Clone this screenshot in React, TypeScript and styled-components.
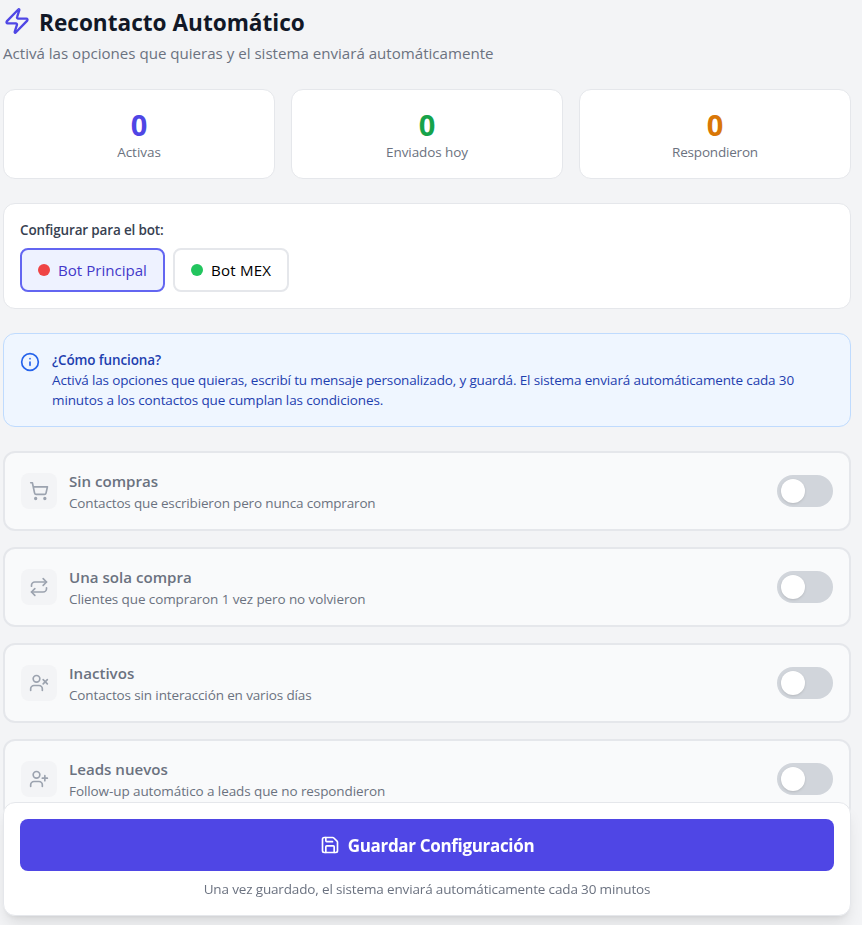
import React from "react";
import styled, { createGlobalStyle } from "styled-components";
import { Zap, Info, ShoppingCart, Repeat, UserX, UserPlus, Save } from "lucide-react";

const GlobalStyle = createGlobalStyle`
  *, *::before, *::after { box-sizing: border-box; }
  body {
    margin: 0;
    background: #f3f4f6;
    color: #000;
    font-family: "Segoe UI", "Open Sans", "Noto Sans", sans-serif;
    font-size: 15.1px;
    line-height: 24px;
  }
  h1, h3, p { margin: 0; }
  button { font: inherit; cursor: pointer; }
`;

const Viewport = styled.div`
  height: 925px;
  overflow: hidden;
  padding: 5px 11px 0 3px;
`;

const Page = styled.main`
  display: flex;
  flex-direction: column;
  gap: 24px;
`;

const Spaced = styled.span<{ $ls?: number }>`
  letter-spacing: ${(p) => p.$ls ?? 0}px;
  white-space: nowrap;
`;

const TitleRow = styled.div`
  display: flex;
  align-items: center;
  gap: 8px;
  height: 32px;
  svg { color: #4f46e5; }
`;

const Title = styled.h1`
  font-size: 22.6px;
  line-height: 32px;
  font-weight: 700;
  color: #111827;
  padding-top: 4px;
`;

const Subtitle = styled.p`
  padding-top: 4px;
  color: #6b7280;
`;

const Stats = styled.section`
  display: grid;
  grid-template-columns: repeat(3, 1fr);
  gap: 16px;
`;

const Panel = styled.section`
  background: #fff;
  border: 1px solid #e5e7eb;
  border-radius: 12px;
  padding: 16px;
`;

const StatCard = styled(Panel)`
  text-align: center;
`;

const StatValue = styled.p<{ $color: string }>`
  height: 36px;
  padding-top: 1px;
  font-size: 29px;
  line-height: 36px;
  font-weight: 700;
  color: ${(p) => p.$color};
`;

const Small = styled.p`
  font-size: 13.5px;
  line-height: 20px;
  color: #6b7280;
`;

const BotLabel = styled(Small)`
  font-weight: 600;
  color: #374151;
  margin-bottom: 8px;
`;

const BotList = styled.div`
  display: flex;
  gap: 8px;
`;

const BotButton = styled.button<{ $active?: boolean; $width: number }>`
  display: flex;
  align-items: center;
  gap: 8px;
  width: ${(p) => p.$width}px;
  height: 44px;
  padding: 0 16px;
  border-radius: 8px;
  border: 2px solid ${(p) => (p.$active ? "#6366f1" : "#e5e7eb")};
  background: ${(p) => (p.$active ? "#eef2ff" : "#fff")};
  color: ${(p) => (p.$active ? "#4338ca" : "#000")};
`;

const Dot = styled.span<{ $color: string }>`
  width: 12px;
  height: 12px;
  flex: none;
  border-radius: 50%;
  background: ${(p) => p.$color};
`;

const InfoBox = styled(Panel)`
  display: flex;
  gap: 12px;
  background: #eff6ff;
  border-color: #bfdbfe;
  svg { color: #2563eb; flex: none; margin-top: 2px; }
`;

const InfoText = styled(Small)<{ $strong?: boolean }>`
  color: #1e40af;
  font-weight: ${(p) => (p.$strong ? 600 : 400)};
`;

const RuleList = styled.section`
  display: flex;
  flex-direction: column;
  gap: 16px;
`;

const RuleCard = styled.article`
  display: flex;
  align-items: center;
  gap: 12px;
  height: 80px;
  padding: 0 16px;
  background: #f9fafb;
  border: 2px solid #e5e7eb;
  border-radius: 12px;
`;

const IconTile = styled.div`
  display: grid;
  place-items: center;
  width: 36px;
  height: 36px;
  border-radius: 8px;
  background: #f3f4f6;
  color: #9ca3af;
`;

const RuleBody = styled.div`
  flex: 1;
`;

const RuleName = styled.h3`
  font-size: 15.1px;
  line-height: 24px;
  font-weight: 600;
  color: #6b7280;
`;

const Toggle = styled.button`
  display: flex;
  align-items: center;
  width: 56px;
  height: 32px;
  padding: 0 4px;
  border: 0;
  border-radius: 16px;
  background: #d1d5db;
`;

const Knob = styled.span`
  width: 24px;
  height: 24px;
  border-radius: 50%;
  background: #fff;
  box-shadow: 0 1px 3px rgba(0, 0, 0, 0.1), 0 1px 2px -1px rgba(0, 0, 0, 0.1);
`;

const SaveBar = styled(Panel)`
  position: sticky;
  bottom: 9px;
  text-align: center;
  box-shadow: 0 10px 15px -3px rgba(0, 0, 0, 0.1), 0 4px 6px -4px rgba(0, 0, 0, 0.1);
`;

const SaveButton = styled.button`
  display: flex;
  align-items: center;
  justify-content: center;
  gap: 8px;
  width: 100%;
  height: 52px;
  margin-bottom: 8px;
  border: 0;
  border-radius: 8px;
  background: #4f46e5;
  color: #fff;
  font-size: 17px;
  line-height: 28px;
  font-weight: 700;
`;

const SaveLabel = styled(Spaced)`
  padding-top: 2px;
`;

const stats = [
  { value: "0", label: "Activas", color: "#4f46e5", ls: -0.05 },
  { value: "0", label: "Enviados hoy", color: "#16a34a", ls: -0.08 },
  { value: "0", label: "Respondieron", color: "#d97706", ls: -0.2 },
];

const rules = [
  { icon: ShoppingCart, name: "Sin compras", text: "Contactos que escribieron pero nunca compraron", ls: -0.16 },
  { icon: Repeat, name: "Una sola compra", text: "Clientes que compraron 1 vez pero no volvieron", ls: -0.1 },
  { icon: UserX, name: "Inactivos", text: "Contactos sin interacción en varios días", ls: -0.13 },
  { icon: UserPlus, name: "Leads nuevos", text: "Follow-up automático a leads que no respondieron", ls: -0.09 },
];

export default function App() {
  return (
    <Viewport>
      <GlobalStyle />
      <Page>
        <header>
          <TitleRow>
            <Zap size={28} />
            <Title><Spaced>Recontacto Automático</Spaced></Title>
          </TitleRow>
          <Subtitle><Spaced>Activá las opciones que quieras y el sistema enviará automáticamente</Spaced></Subtitle>
        </header>

        <Stats>
          {stats.map((s) => (
            <StatCard key={s.label}>
              <StatValue $color={s.color}>{s.value}</StatValue>
              <Small><Spaced $ls={s.ls}>{s.label}</Spaced></Small>
            </StatCard>
          ))}
        </Stats>

        <Panel>
          <BotLabel><Spaced $ls={-0.16}>Configurar para el bot:</Spaced></BotLabel>
          <BotList>
            <BotButton $active $width={145}><Dot $color="#ef4444" /><Spaced>Bot Principal</Spaced></BotButton>
            <BotButton $width={116}><Dot $color="#22c55e" /><Spaced $ls={0.2}>Bot MEX</Spaced></BotButton>
          </BotList>
        </Panel>

        <InfoBox>
          <Info size={20} />
          <div>
            <InfoText $strong><Spaced $ls={-0.13}>¿Cómo funciona?</Spaced></InfoText>
            <InfoText>
              <Spaced $ls={-0.147}>Activá las opciones que quieras, escribí tu mensaje personalizado, y guardá. El sistema enviará automáticamente cada 30</Spaced>
              <br />
              <Spaced $ls={-0.12}>minutos a los contactos que cumplan las condiciones.</Spaced>
            </InfoText>
          </div>
        </InfoBox>

        <RuleList>
          {rules.map(({ icon: Icon, name, text, ls }) => (
            <RuleCard key={name}>
              <IconTile><Icon size={20} /></IconTile>
              <RuleBody>
                <RuleName><Spaced>{name}</Spaced></RuleName>
                <Small><Spaced $ls={ls}>{text}</Spaced></Small>
              </RuleBody>
              <Toggle role="switch" aria-checked={false} aria-label={name}><Knob /></Toggle>
            </RuleCard>
          ))}
        </RuleList>

        <SaveBar>
          <SaveButton><Save size={20} /><SaveLabel $ls={-0.32}>Guardar Configuración</SaveLabel></SaveButton>
          <Small><Spaced $ls={-0.15}>Una vez guardado, el sistema enviará automáticamente cada 30 minutos</Spaced></Small>
        </SaveBar>
      </Page>
    </Viewport>
  );
}
